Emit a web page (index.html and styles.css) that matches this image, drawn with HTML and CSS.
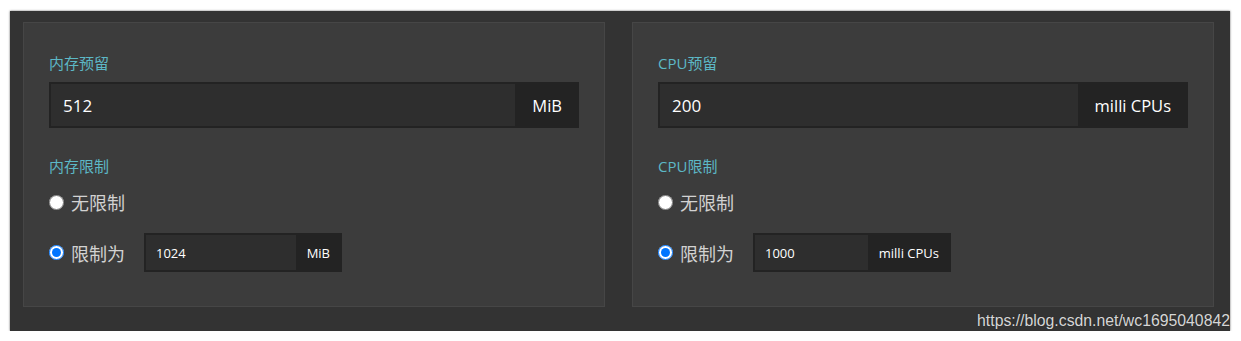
FILE: index.html
```html
<!DOCTYPE html>
<html lang="zh-CN">
<head>
    <meta charset="UTF-8">
    <meta name="viewport" content="width=device-width, initial-scale=1.0">
    <title>资源配置</title>
    <link rel="stylesheet" href="styles.css">
</head>
<body>
    <div class="frame">
        <div class="panel">
            <label class="field-label" for="memRequest">内存预留</label>
            <div class="input-group">
                <input type="text" id="memRequest" class="field-input" value="512">
                <span class="addon">MiB</span>
            </div>

            <div class="field-label limit-label">内存限制</div>
            <label class="radio-row">
                <input type="radio" name="memLimit" class="radio">
                <span class="radio-text">无限制</span>
            </label>
            <label class="radio-row radio-row-input">
                <input type="radio" name="memLimit" class="radio" checked>
                <span class="radio-text">限制为</span>
                <span class="input-group input-group-sm">
                    <input type="text" class="field-input" value="1024">
                    <span class="addon">MiB</span>
                </span>
            </label>
        </div>

        <div class="panel">
            <label class="field-label" for="cpuRequest">CPU预留</label>
            <div class="input-group">
                <input type="text" id="cpuRequest" class="field-input" value="200">
                <span class="addon">milli CPUs</span>
            </div>

            <div class="field-label limit-label">CPU限制</div>
            <label class="radio-row">
                <input type="radio" name="cpuLimit" class="radio">
                <span class="radio-text">无限制</span>
            </label>
            <label class="radio-row radio-row-input">
                <input type="radio" name="cpuLimit" class="radio" checked>
                <span class="radio-text">限制为</span>
                <span class="input-group input-group-sm">
                    <input type="text" class="field-input" value="1000">
                    <span class="addon">milli CPUs</span>
                </span>
            </label>
        </div>

        <div class="watermark">https://blog.csdn.net/wc1695040842</div>
    </div>
</body>
</html>
```

FILE: styles.css
```css
* {
    margin: 0;
    padding: 0;
    box-sizing: border-box;
}

body {
    background: #fff;
    font-family: 'Open Sans', 'Noto Sans CJK SC', sans-serif;
    color: #d2d2d2;
}

.frame {
    position: relative;
    margin: 11px 11px 0 10px;
    height: 320px;
    background: #333;
    padding: 11px 16px 0 13px;
    display: flex;
    gap: 27px;
    box-shadow: 0 0 2px rgba(0, 0, 0, 0.6);
}

.panel {
    width: 582px;
    height: 285px;
    background: #3c3c3c;
    border: 1px solid #464646;
    padding: 30px 25px 0 25px;
    display: flex;
    flex-direction: column;
    align-items: flex-start;
}

.field-label {
    display: block;
    font-size: 15px;
    line-height: 20px;
    color: #5cb8c6;
    margin-bottom: 9px;
}

.limit-label {
    margin-top: 28px;
    margin-bottom: 0;
}

.input-group {
    display: flex;
    width: 100%;
    height: 46px;
    border: 2px solid #232323;
    background: #232323;
}

.field-input {
    flex: 1;
    min-width: 0;
    background: #2e2e2e;
    border: none;
    outline: none;
    color: #fff;
    font-family: inherit;
    font-size: 17px;
    padding: 0 12px;
}

.addon {
    display: flex;
    align-items: center;
    padding: 0 15px 0 17px;
    font-size: 16.5px;
    color: #fff;
}

.radio-row {
    display: flex;
    align-items: center;
    height: 30px;
    margin-top: 11px;
}

.radio-row-input {
    height: 39px;
    margin-top: 16px;
}

.radio {
    width: 15px;
    height: 15px;
    margin: 0;
}

.radio-text {
    font-size: 18px;
    margin-left: 7px;
}

.input-group-sm {
    width: 198px;
    height: 39px;
    margin-left: 19px;
}

.input-group-sm .field-input {
    font-size: 13px;
    padding: 0 10px;
}

.input-group-sm .addon {
    font-size: 13px;
    padding: 0 10px 0 11px;
}

.watermark {
    position: absolute;
    right: 0;
    bottom: 1px;
    font-family: 'Liberation Sans', Arial, sans-serif;
    font-size: 15.8px;
    color: #d6d6d6;
    text-shadow: 0 0 1px #222;
}
```
